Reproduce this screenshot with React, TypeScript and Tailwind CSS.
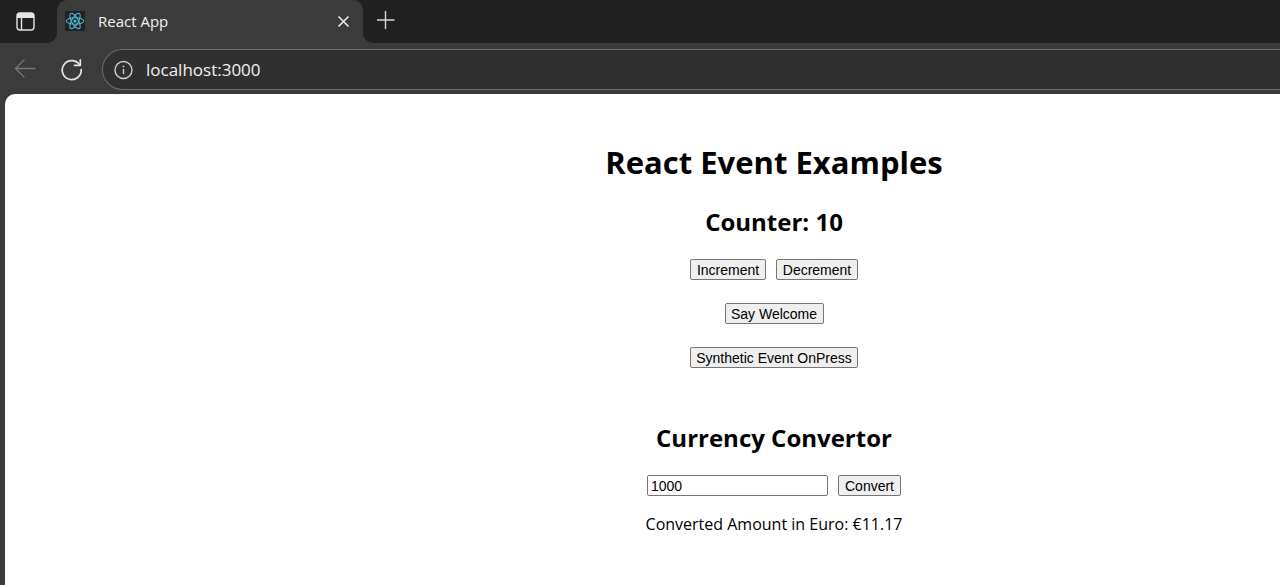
import { useState } from "react";
import type { ButtonHTMLAttributes } from "react";

const RATE = 89.5255;

function PageButton({ className = "", ...props }: ButtonHTMLAttributes<HTMLButtonElement>) {
  return (
    <button
      type="button"
      className={`h-[21px] rounded-[2px] border border-[#767676] bg-[#efefef] text-center font-['Liberation_Sans',Arial,sans-serif] text-[14px] leading-[20px] whitespace-nowrap text-black ${className}`}
      {...props}
    />
  );
}

function ReactLogo() {
  return (
    <svg viewBox="0 0 20 20" className="size-5 shrink-0" fill="none" stroke="#4fb4d2" strokeWidth="1.1" aria-hidden="true">
      <rect width="20" height="20" rx="1" fill="#202225" stroke="none" />
      <ellipse cx="10" cy="10" rx="8.7" ry="3.3" />
      <ellipse cx="10" cy="10" rx="8.7" ry="3.3" transform="rotate(60 10 10)" />
      <ellipse cx="10" cy="10" rx="8.7" ry="3.3" transform="rotate(120 10 10)" />
      <circle cx="10" cy="10" r="1.6" fill="#4fb4d2" stroke="none" />
    </svg>
  );
}

function TabStrip() {
  return (
    <div className="flex h-[43px]">
      <div className="flex w-[57px] items-center rounded-br-[10px] bg-[#202020] pl-4">
        <button type="button" aria-label="Tab actions" className="text-[#e4e4e4]">
          <svg viewBox="0 0 20 20" className="block size-5" fill="none" stroke="currentColor" strokeWidth="1.4">
            <rect x="1" y="1" width="17" height="17" rx="3" />
            <path d="M1 6V4a3 3 0 0 1 3-3h11a3 3 0 0 1 3 3v2z" fill="currentColor" stroke="none" />
            <path d="M5.500 6v12" />
          </svg>
        </button>
      </div>
      <div className="w-[306px] bg-[#202020]">
        <div className="flex h-full items-center rounded-t-[10px] bg-[#3b3b3b] pr-3 pb-[2px] pl-2">
          <ReactLogo />
          <span className="ml-[13px] flex-1 text-[15px] leading-5 text-[#f2f2f2]">React App</span>
          <button type="button" aria-label="Close tab" className="text-[#f0f0f0]">
            <svg viewBox="0 0 16 16" className="block size-4" fill="none" stroke="currentColor" strokeWidth="1.5">
              <path d="M3.500 3.500l10 10M13.500 3.500l-10 10" />
            </svg>
          </button>
        </div>
      </div>
      <div className="flex flex-1 items-center rounded-bl-[10px] bg-[#202020] pb-[3px] pl-3">
        <button type="button" aria-label="New tab" className="text-[#d8d8d8]">
          <svg viewBox="0 0 20 20" className="block size-5" fill="none" stroke="currentColor" strokeWidth="1.4">
            <path d="M10.500 1v18M2 10h17.500" />
          </svg>
        </button>
      </div>
    </div>
  );
}

function Toolbar() {
  return (
    <div className="flex h-[51px] items-center pt-[2px]">
      <button type="button" aria-label="Back" className="ml-[14px] text-[#757575]">
        <svg viewBox="0 0 22 22" className="block size-[22px]" fill="none" stroke="currentColor" strokeWidth="1.4" strokeLinecap="round" strokeLinejoin="round">
          <path d="M21 9.500H1.500M10 1L1.500 9.500l8.500 8.500" />
        </svg>
      </button>
      <button type="button" aria-label="Reload" className="ml-6 text-[#e6e6e6]">
        <svg viewBox="0 0 24 24" className="block size-6" fill="none" stroke="currentColor" strokeWidth="1.7" strokeLinecap="round" strokeLinejoin="round">
          <path d="M19.500 6.700A9.500 9.500 0 1 0 21.200 11.500" />
          <path d="M20.300 1.800v5.500h-5.800" />
        </svg>
      </button>
      <div className="ml-[18px] flex h-[41px] flex-1 items-center rounded-l-full border border-r-0 border-[#6e6e6e] bg-[#303030] pl-[10px]">
        <svg viewBox="0 0 20 20" className="size-5 shrink-0" fill="none" stroke="#cfcfcf" strokeWidth="1.4" aria-hidden="true">
          <circle cx="10.500" cy="10" r="8.500" />
          <path d="M10.500 9v5" />
          <circle cx="10.500" cy="6.500" r="0.900" fill="#cfcfcf" stroke="none" />
        </svg>
        <input
          type="text"
          aria-label="Address"
          defaultValue="localhost:3000"
          className="ml-[13px] min-w-0 flex-1 bg-transparent text-[17px] leading-6 text-[#f2f2f2] outline-none"
        />
      </div>
    </div>
  );
}

export default function App() {
  const [count, setCount] = useState(10);
  const [amount, setAmount] = useState("1000");
  const [euro, setEuro] = useState("11.17");
  const [, setMessage] = useState("");

  return (
    <div className="flex min-h-screen flex-col overflow-hidden bg-[#3b3b3b] font-['Open_Sans','Noto_Sans',sans-serif]">
      <TabStrip />
      <Toolbar />
      <main className="ml-[5px] flex flex-1 flex-col items-center rounded-tl-[10px] bg-white pt-12 pb-8 pl-[263px] text-black">
        <h1 className="text-[31px] leading-10 font-bold whitespace-nowrap">React Event Examples</h1>
        <h2 className="mt-6 text-[24px] leading-8 font-bold">Counter: {count}</h2>
        <div className="mt-[21px] flex gap-[10px]">
          <PageButton className="w-[76px]" onClick={() => setCount(count + 1)}>Increment</PageButton>
          <PageButton className="w-[82px]" onClick={() => setCount(count - 1)}>Decrement</PageButton>
        </div>
        <PageButton className="mt-[23px] w-[99px]" onClick={() => setMessage("Welcome")}>Say Welcome</PageButton>
        <PageButton className="mt-[23px] w-[168px]" onClick={() => setMessage("I was clicked")}>Synthetic Event OnPress</PageButton>
        <h2 className="mt-[54px] text-[24px] leading-8 font-bold">Currency Convertor</h2>
        <form
          className="mt-[21px] flex gap-[10px]"
          onSubmit={(event) => {
            event.preventDefault();
            setEuro((Number(amount) / RATE).toFixed(2));
          }}
        >
          <input
            type="text"
            aria-label="Amount"
            value={amount}
            onChange={(event) => setAmount(event.target.value)}
            className="h-[21px] w-[181px] rounded-[2px] border border-[#767676] bg-white px-[3px] font-['Liberation_Sans',Arial,sans-serif] text-[14px] leading-[19px] text-black"
          />
          <PageButton type="submit" className="w-[63px]">Convert</PageButton>
        </form>
        <p className="mt-4 text-[16px] leading-6">Converted Amount in Euro: €{euro}</p>
      </main>
    </div>
  );
}
